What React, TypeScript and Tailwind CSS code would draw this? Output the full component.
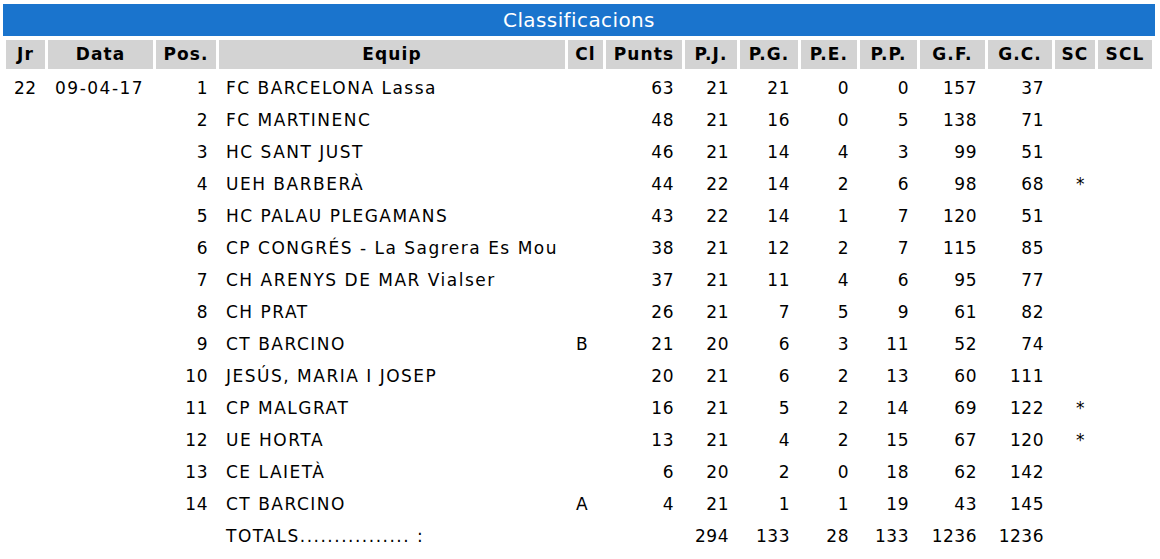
import React from 'react';

type Row = {
    pos: number;
    equip: string;
    cl?: string;
    punts: number;
    pj: number;
    pg: number;
    pe: number;
    pp: number;
    gf: number;
    gc: number;
    sc?: string;
};

const rows: Row[] = [
    { pos: 1, equip: 'FC BARCELONA Lassa', punts: 63, pj: 21, pg: 21, pe: 0, pp: 0, gf: 157, gc: 37 },
    { pos: 2, equip: 'FC MARTINENC', punts: 48, pj: 21, pg: 16, pe: 0, pp: 5, gf: 138, gc: 71 },
    { pos: 3, equip: 'HC SANT JUST', punts: 46, pj: 21, pg: 14, pe: 4, pp: 3, gf: 99, gc: 51 },
    { pos: 4, equip: 'UEH BARBERÀ', punts: 44, pj: 22, pg: 14, pe: 2, pp: 6, gf: 98, gc: 68, sc: '*' },
    { pos: 5, equip: 'HC PALAU PLEGAMANS', punts: 43, pj: 22, pg: 14, pe: 1, pp: 7, gf: 120, gc: 51 },
    { pos: 6, equip: 'CP CONGRÉS - La Sagrera Es Mou', punts: 38, pj: 21, pg: 12, pe: 2, pp: 7, gf: 115, gc: 85 },
    { pos: 7, equip: 'CH ARENYS DE MAR Vialser', punts: 37, pj: 21, pg: 11, pe: 4, pp: 6, gf: 95, gc: 77 },
    { pos: 8, equip: 'CH PRAT', punts: 26, pj: 21, pg: 7, pe: 5, pp: 9, gf: 61, gc: 82 },
    { pos: 9, equip: 'CT BARCINO', cl: 'B', punts: 21, pj: 20, pg: 6, pe: 3, pp: 11, gf: 52, gc: 74 },
    { pos: 10, equip: 'JESÚS, MARIA I JOSEP', punts: 20, pj: 21, pg: 6, pe: 2, pp: 13, gf: 60, gc: 111 },
    { pos: 11, equip: 'CP MALGRAT', punts: 16, pj: 21, pg: 5, pe: 2, pp: 14, gf: 69, gc: 122, sc: '*' },
    { pos: 12, equip: 'UE HORTA', punts: 13, pj: 21, pg: 4, pe: 2, pp: 15, gf: 67, gc: 120, sc: '*' },
    { pos: 13, equip: 'CE LAIETÀ', punts: 6, pj: 20, pg: 2, pe: 0, pp: 18, gf: 62, gc: 142 },
    { pos: 14, equip: 'CT BARCINO', cl: 'A', punts: 4, pj: 21, pg: 1, pe: 1, pp: 19, gf: 43, gc: 145 },
];

const headers = ['Jr', 'Data', 'Pos.', 'Equip', 'Cl', 'Punts', 'P.J.', 'P.G.', 'P.E.', 'P.P.', 'G.F.', 'G.C.', 'SC', 'SCL'];

const grid = 'grid grid-cols-[39px_105px_60px_346px_35px_76px_52px_58px_56px_57px_65px_64px_40px_54px] gap-x-[3px]';

// numbers: right aligned, a touch of tracking to match the wider original face
const num = 'text-right pr-[8px] tracking-[0.5px] [&>span]:mr-[-0.5px]';

export default function App() {
    return (
        <div className="bg-white min-h-screen text-black pt-[4px] px-[3px]" style={{ fontFamily: '"DejaVu Sans", Verdana, sans-serif' }}>
            <div className="w-[1152px]">
                <div className="h-[32px] bg-[#1a74cd] text-white text-[20px] tracking-[0.4px] flex items-center justify-center">
                    Classificacions
                </div>
                <div className={`${grid} px-[3px] mt-[4px]`}>
                    {headers.map((h) => (
                        <div key={h} className="h-[29px] pt-[1px] bg-[#d3d3d3] flex items-center justify-center font-bold text-[17px] tracking-[1.1px]">
                            {h}
                        </div>
                    ))}
                </div>
                <div className="px-[3px] mt-[4px] text-[17px]">
                    {rows.map((r, i) => (
                        <div key={r.pos} className={`${grid} h-[32px] items-center`}>
                            <div className="pl-[8px] tracking-[0.5px]">{i === 0 ? '22' : ''}</div>
                            <div className="pl-[7px] tracking-[1.5px]">{i === 0 ? '09-04-17' : ''}</div>
                            <div className={num}>{r.pos}</div>
                            <div className="pl-[7px] whitespace-nowrap tracking-[1.5px]">{r.equip}</div>
                            <div className="pl-[8px]">{r.cl ?? ''}</div>
                            <div className={num}>{r.punts}</div>
                            <div className={num}>{r.pj}</div>
                            <div className={num}>{r.pg}</div>
                            <div className={num}>{r.pe}</div>
                            <div className={num}>{r.pp}</div>
                            <div className={num}>{r.gf}</div>
                            <div className={num}>{r.gc}</div>
                            <div className="pl-[21px]">{r.sc ?? ''}</div>
                            <div></div>
                        </div>
                    ))}
                    <div className={`${grid} h-[32px] items-center`}>
                        <div></div>
                        <div></div>
                        <div></div>
                        <div className="pl-[7px] whitespace-nowrap tracking-[1.5px]">TOTALS................ :</div>
                        <div></div>
                        <div></div>
                        <div className={num}>294</div>
                        <div className={num}>133</div>
                        <div className={num}>28</div>
                        <div className={num}>133</div>
                        <div className={num}>1236</div>
                        <div className={num}>1236</div>
                        <div></div>
                        <div></div>
                    </div>
                </div>
            </div>
        </div>
    );
}
